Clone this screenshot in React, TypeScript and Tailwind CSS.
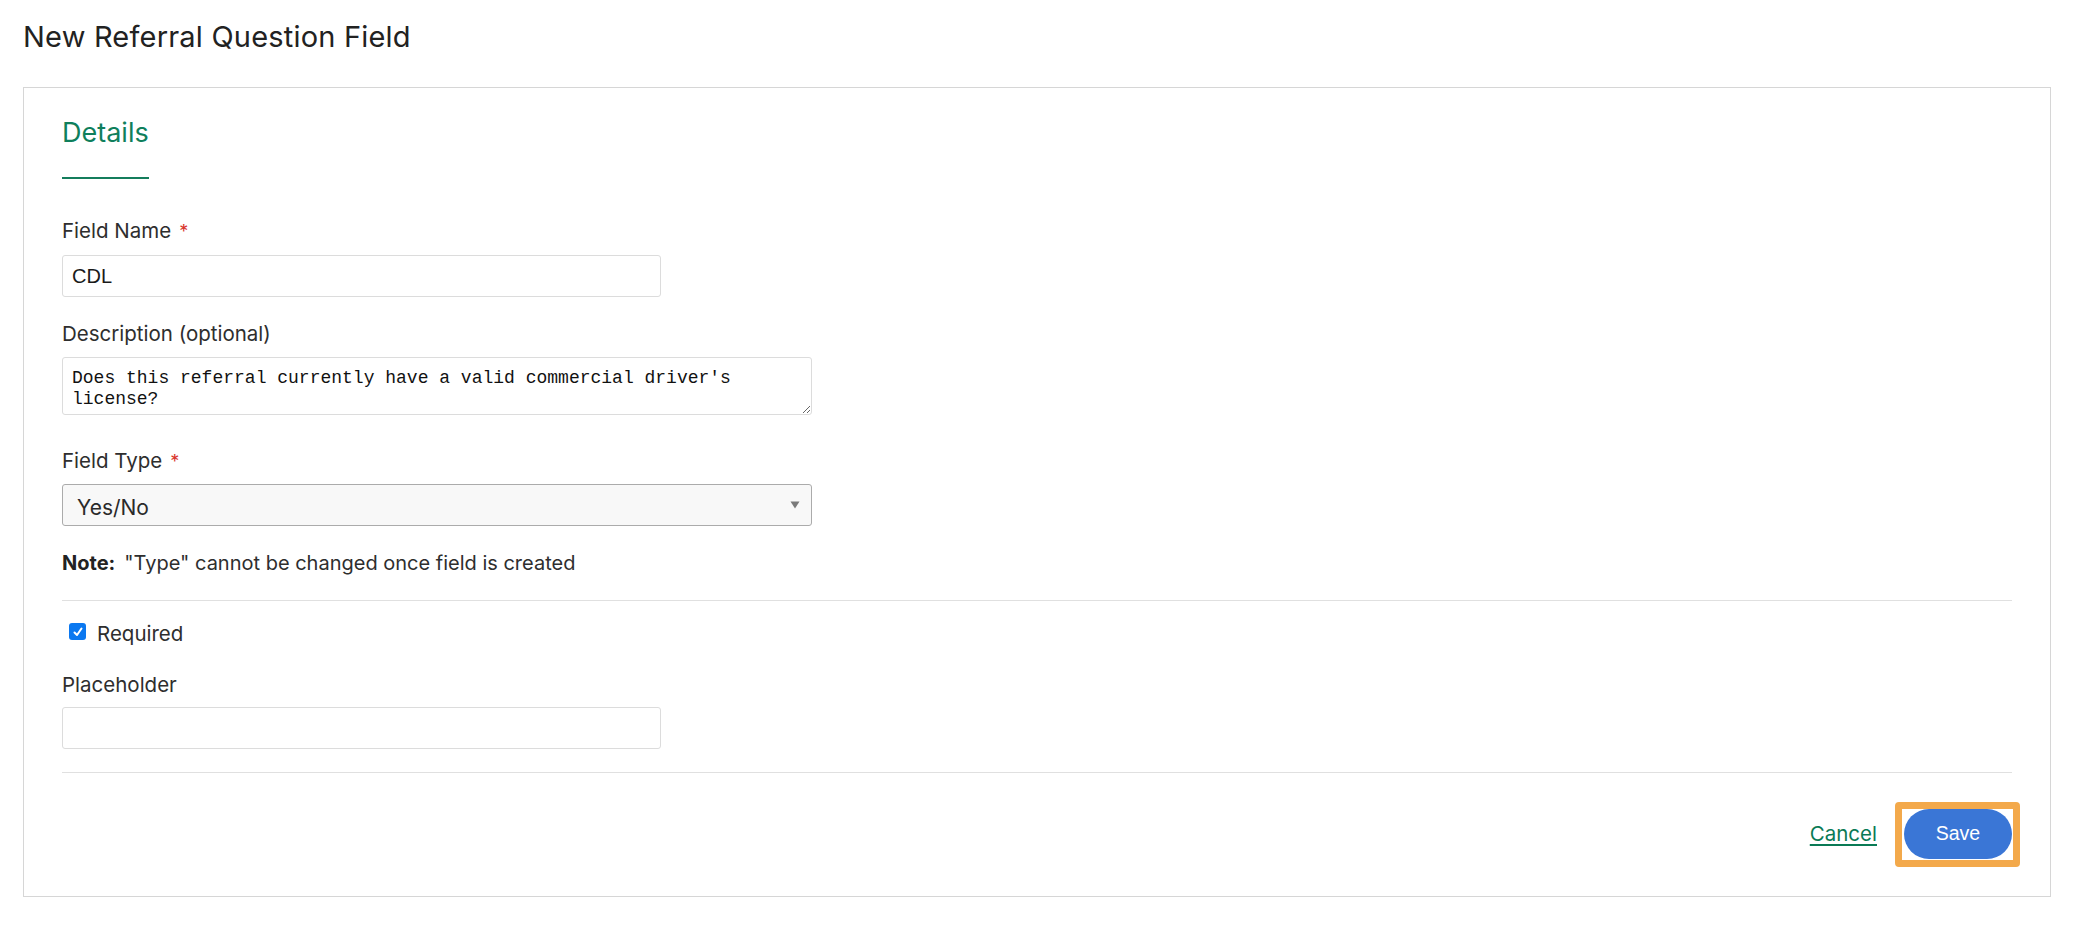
import React from "react";

export default function App() {
  return (
    <div className="min-h-screen bg-white font-['Inter',sans-serif] text-[#2e2e2e]">
      <h1 className="pt-[20px] pl-[23px] text-[29px] leading-[34px] tracking-[0.2px] font-normal text-[#222]">
        New Referral Question Field
      </h1>

      <div className="mt-[33px] ml-[23px] w-[2028px] border border-[#d6d6d6] px-[38px]">
        <div className="flex pt-[28px]">
          <span className="block pb-[28px] border-b-2 border-[#147d5c] text-[27px] leading-[33px] text-[#0f7f5c]">
            Details
          </span>
        </div>

        <div className="mt-[40px] text-[20.5px] leading-[24px]">
          Field Name<span className="ml-[8px] text-[18px] text-[#d9342b]">*</span>
        </div>
        <input
          readOnly
          value="CDL"
          className="mt-[11px] block w-[599px] h-[42px] border border-[#dcdcdc] rounded-[3px] px-[9px] font-['Liberation_Sans',Arial,sans-serif] text-[20px] text-[#1a1a1a] outline-none"
        />

        <div className="mt-[25px] text-[20.5px] leading-[24px]">Description (optional)</div>
        <textarea
          readOnly
          value="Does this referral currently have a valid commercial driver's license?"
          className="mt-[11px] block w-[750px] h-[58px] border border-[#dcdcdc] rounded-[3px] px-[9px] pt-[10px] font-['Liberation_Mono',monospace] text-[18px] leading-[20.5px] text-[#111] outline-none resize-y"
        />

        <div className="mt-[34px] text-[20.5px] leading-[24px]">
          Field Type<span className="ml-[8px] text-[18px] text-[#d9342b]">*</span>
        </div>
        <div className="mt-[10px] w-[750px] h-[42px] border border-[#ababab] rounded-[3px] bg-[#f8f8f8] flex items-center justify-between pl-[14px] pr-[11px]">
          <span className="text-[21px] leading-[24px] pt-[5px] text-[#2a2a2a]">Yes/No</span>
          <svg width="10" height="8" viewBox="0 0 10 8" className="mb-[1px]">
            <polygon points="0.5,0.5 9.5,0.5 5,7.5" fill="#7a7a7a" />
          </svg>
        </div>

        <p className="mt-[25px] text-[20px] leading-[24px]">
          <b className="font-bold text-[#222]">Note:</b>
          <span className="ml-[9px]">"Type" cannot be changed once field is created</span>
        </p>

        <div className="mt-[25px] h-px bg-[#e0e0e0]" />

        <div className="mt-[21px] flex items-start">
          <span className="mt-[1px] ml-[7px] w-[17px] h-[17px] rounded-[3px] bg-[#0b78f0] flex items-center justify-center">
            <svg width="12" height="12" viewBox="0 0 12 12">
              <path d="M2.5 6.5 L5 9 L9.5 2.5" stroke="white" strokeWidth="2" fill="none" strokeLinecap="round" strokeLinejoin="round" />
            </svg>
          </span>
          <span className="ml-[11px] text-[20.5px] leading-[24px]">Required</span>
        </div>

        <div className="mt-[27px] text-[20.5px] leading-[24px]">Placeholder</div>
        <input
          readOnly
          value=""
          className="mt-[10px] block w-[599px] h-[42px] border border-[#dcdcdc] rounded-[3px] px-[9px] text-[20px] outline-none"
        />

        <div className="mt-[23px] h-px bg-[#e0e0e0]" />

        <div className="flex justify-end items-center pt-[36px] pb-[37px]">
          <a className="mr-[27px] text-[20.5px] text-[#0a7a55] underline decoration-2 underline-offset-[3px] cursor-pointer">
            Cancel
          </a>
          <button className="relative w-[108px] h-[50px] rounded-full bg-[#3a76d6] text-white font-['Liberation_Sans',Arial,sans-serif] text-[19.5px]">
            Save
            <span className="absolute left-[-9px] right-[-8px] top-[-7px] bottom-[-8px] border-[7px] border-[#f3a94b] rounded-[4px] pointer-events-none" />
          </button>
        </div>
      </div>
    </div>
  );
}
